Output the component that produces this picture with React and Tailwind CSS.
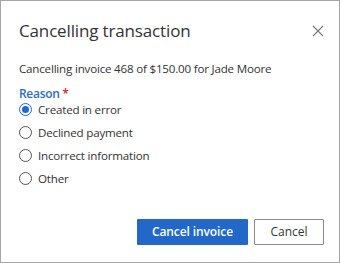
import React, { useState } from "react";

const options = ["Created in error", "Declined payment", "Incorrect information", "Other"];

export default function App() {
  const [sel, setSel] = useState(0);
  return (
    <div
      className="w-[340px] h-[263px] bg-white border border-[#a6a6a6] flex flex-col text-[#333]"
      style={{ fontFamily: '"Open Sans", "Noto Sans", sans-serif' }}
    >
      <div className="flex items-center justify-between pl-[18px] pr-[15px] pt-[13px] h-[45px]">
        <h1 className="text-[17px] text-[#333] leading-none tracking-[-0.15px]">Cancelling transaction</h1>
        <svg width="12" height="12" viewBox="0 0 12 12" className="mt-[1px]">
          <path d="M1 1L11 11M11 1L1 11" stroke="#777" strokeWidth="1.1" />
        </svg>
      </div>
      <div className="px-[18px] pt-[15px]">
        <p className="text-[11.6px] leading-[16px] tracking-[-0.2px] text-[#333]">
          Cancelling invoice 468 of $150.00 for Jade Moore
        </p>
        <div className="mt-[9px] text-[12px] leading-[16px] font-semibold text-[#2b6cc4] tracking-[-0.3px]">
          Reason <span className="text-[#c0282d]">*</span>
        </div>
        <div className="flex flex-col -mt-[4px]">
          {options.map((o, i) => (
            <label key={o} className="flex items-center gap-[6px] h-[23px] cursor-pointer" onClick={() => setSel(i)}>
              <span
                className={
                  "w-[13px] h-[13px] rounded-full flex items-center justify-center border " +
                  (sel === i ? "border-[#2168c9]" : "border-[#555]")
                }
              >
                {sel === i && <span className="w-[7px] h-[7px] rounded-full bg-[#2168c9]" />}
              </span>
              <span className="text-[11.6px] tracking-[-0.2px] text-[#333]">{o}</span>
            </label>
          ))}
        </div>
      </div>
      <div className="mt-auto flex justify-end gap-[6px] pr-[15px] pb-[17px]">
        <button className="w-[111px] h-[26px] bg-[#2168c9] text-white text-[12px] font-semibold rounded-[1px] tracking-[-0.1px]">
          Cancel invoice
        </button>
        <button className="w-[70px] h-[26px] bg-white border border-[#8a8a8a] text-[#333] text-[12px] rounded-[1px]">
          Cancel
        </button>
      </div>
    </div>
  );
}
